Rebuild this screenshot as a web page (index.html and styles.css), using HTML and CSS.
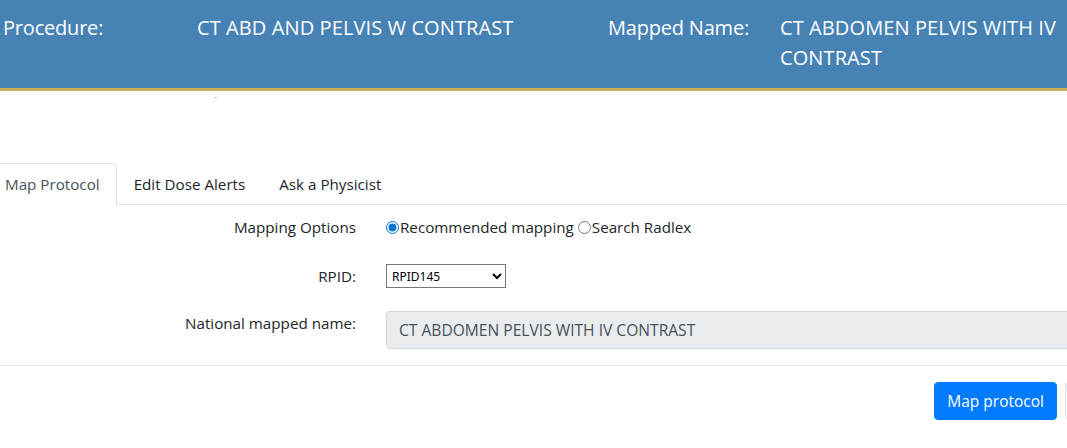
FILE: index.html
```html
<!DOCTYPE html>
<html lang="en">
<head>
<meta charset="utf-8">
<title>Map Protocol</title>
<link rel="stylesheet" href="styles.css">
</head>
<body>
<div class="page">
  <header class="banner">
    <div class="banner-row">
      <div class="b-label">Procedure:</div>
      <div class="b-value">CT ABD AND PELVIS W CONTRAST</div>
      <div class="b-label">Mapped Name:</div>
      <div class="b-value">CT ABDOMEN PELVIS WITH IV CONTRAST</div>
    </div>
  </header>

  <div class="crumb"><span class="dot"></span></div>

  <nav class="tabs">
    <a class="tab active">Map Protocol</a>
    <a class="tab">Edit Dose Alerts</a>
    <a class="tab">Ask a Physicist</a>
  </nav>

  <form class="form">
    <div class="row row-options">
      <label class="lbl">Mapping Options</label>
      <div class="radios">
        <input type="radio" name="opt" id="rec" checked><label for="rec">Recommended mapping</label>
        <input type="radio" name="opt" id="rad" class="second"><label for="rad">Search Radlex</label>
      </div>
    </div>
    <div class="row row-rpid">
      <label class="lbl">RPID:</label>
      <select class="select">
        <option>RPID145</option>
      </select>
    </div>
    <div class="row row-name">
      <label class="lbl">National mapped name:</label>
      <div class="static">CT ABDOMEN PELVIS WITH IV CONTRAST</div>
    </div>
  </form>

  <hr class="rule">

  <div class="actions">
    <button class="btn btn-primary" type="button">Map protocol</button>
    <button class="btn btn-light" type="button" aria-label="Cancel"></button>
  </div>
</div>
</body>
</html>
```

FILE: styles.css
```css
html, body {
  margin: 0;
  padding: 0;
  overflow: hidden;
  background: #ffffff;
}

body {
  font-family: "Open Sans", "Noto Sans", sans-serif;
  font-size: 15.2px;
  color: #212529;
}

.page {
  width: 1150px;
}

.banner {
  background: #4682b4;
  border-bottom: 3px solid #cdae5e;
  height: 88px;
  color: #ffffff;
  font-size: 20px;
  line-height: 30px;
}

.banner-row {
  display: grid;
  grid-template-columns: 194px 411px 172px 287px;
  padding: 13px 0 0 3px;
}

.b-label {
  letter-spacing: -0.2px;
}

.b-value {
  letter-spacing: 0.1px;
}

.crumb {
  height: 72px;
  padding-left: 214px;
  box-sizing: border-box;
  padding-top: 6px;
}

.dot {
  display: block;
  width: 3px;
  height: 1px;
  background: #c8c8c8;
}

.tabs {
  display: flex;
  margin-left: -12px;
  border-bottom: 1px solid #dee2e6;
}

.tab {
  display: block;
  padding: 8px 16px;
  line-height: 24px;
  border: 1px solid transparent;
  border-top-left-radius: 4px;
  border-top-right-radius: 4px;
  margin-bottom: -1px;
  color: #212529;
}

.tab.active {
  color: #495057;
  background: #ffffff;
  border-color: #dee2e6 #dee2e6 #ffffff;
}

.form {
  padding-top: 10px;
  margin: 0;
}

.row {
  display: flex;
  align-items: flex-start;
  gap: 30px;
  padding-right: 15px;
}

.lbl {
  flex: 0 0 356px;
  text-align: right;
  line-height: 24px;
  color: #212529;
}

.row-options {
  margin-bottom: 25px;
}

.row-rpid {
  margin-bottom: 23px;
}

.radios {
  display: flex;
  align-items: center;
  line-height: 24px;
}

.radios input {
  margin: 0 1px 0 0;
  width: 13px;
  height: 13px;
  accent-color: #0a74da;
}

.radios input.second {
  margin-left: 4px;
}

.select {
  width: 120px;
  height: 24px;
  font-family: "Noto Sans", "Open Sans", sans-serif;
  font-size: 12px;
  color: #000000;
  background: #ffffff;
  border: 1px solid #767676;
  border-radius: 0;
  padding: 0 0 0 1px;
}

.static {
  flex: 1;
  height: 38px;
  box-sizing: border-box;
  border: 1px solid #ced4da;
  border-radius: 4px;
  background: #e9ecef;
  padding: 6px 12px;
  line-height: 24px;
  font-size: 15.6px;
  color: #495057;
}

.rule {
  margin: 16px 0;
  border: 0;
  border-top: 1px solid #e5e5e5;
  height: 0;
}

.actions {
  display: flex;
  justify-content: flex-end;
  gap: 8px;
  padding-right: 15px;
}

.btn {
  font-family: "Open Sans", "Noto Sans", sans-serif;
  font-size: 15.5px;
  line-height: 24px;
  padding: 6px 12px;
  border-radius: 4px;
  border: 1px solid transparent;
}

.btn-primary {
  background: #007bff;
  border-color: #007bff;
  color: #ffffff;
}

.btn-light {
  width: 70px;
  height: 38px;
  background: #f8f9fa;
  border-color: #dee2e6;
  color: #212529;
}
```
